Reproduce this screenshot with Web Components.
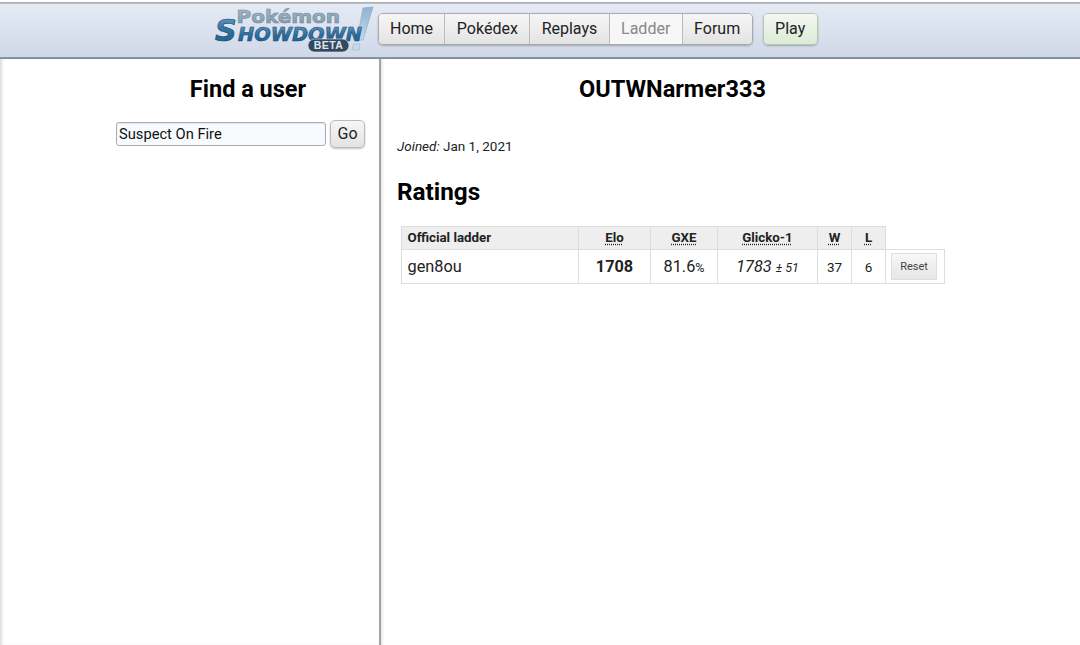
<!DOCTYPE html>
<html><head><meta charset="utf-8">
<style>
html,body{margin:0;padding:0;height:100%;overflow:hidden;background:#fff;font-family:Roboto,"Liberation Sans",sans-serif;color:#000}
body{display:flex;flex-direction:column;height:645px}
</style></head><body>
<ps-header></ps-header>
<ps-main>
  <ps-sidebar slot="side"></ps-sidebar>
  <ps-profile slot="content"></ps-profile>
</ps-main>
<script>
function def(name,html){
  customElements.define(name,class extends HTMLElement{
    connectedCallback(){ if(this.shadowRoot) return; this.attachShadow({mode:'open'}).innerHTML=html; }
  });
}
def('ps-logo',`<style>:host{display:block;width:164px;height:50px;flex:none}svg{display:block;overflow:visible}</style>
<svg width="164" height="50" viewBox="0 0 164 50">
<defs>
<linearGradient id="blue" x1="0" y1="0" x2="0" y2="1"><stop offset="0" stop-color="#6ea5cd"/><stop offset=".5" stop-color="#2f719f"/><stop offset="1" stop-color="#1e5a8b"/></linearGradient>
<linearGradient id="grey" x1="0" y1="0" x2="0" y2="1"><stop offset="0" stop-color="#a9bdc9"/><stop offset="1" stop-color="#7f9aac"/></linearGradient>
<linearGradient id="bang" x1="0" y1="0" x2="0" y2="1"><stop offset="0" stop-color="#8fb2d3"/><stop offset="1" stop-color="#c5d8ea"/></linearGradient>
</defs>
<text x="22.500" y="19.500" font-family="'DejaVu Sans',sans-serif" font-weight="700" font-size="18.500" fill="url(#grey)" stroke="#6f8a9c" stroke-width=".6" textLength="103.500" lengthAdjust="spacingAndGlyphs">Pokémon</text>
<path d="M149 5 159 4 149 37 143 37Z" fill="url(#bang)" stroke="#86a6c3" stroke-width=".6"/>
<path d="M139.500 41 146 41 145 47 138 47Z" fill="#c5d8ea" stroke="#9db8d0" stroke-width=".6"/>
<text x="1" y="38" font-family="'DejaVu Sans',sans-serif" font-weight="700" font-style="italic" font-size="30" fill="url(#blue)" stroke="#174a75" stroke-width=".7">S</text>
<text x="24" y="38" font-family="'DejaVu Sans',sans-serif" font-weight="700" font-style="italic" font-size="19" fill="url(#blue)" stroke="#174a75" stroke-width=".6" textLength="124" lengthAdjust="spacingAndGlyphs">HOWDOWN</text>
<rect x="94" y="36" width="41" height="13" rx="6.500" fill="#33495f" stroke="#dfe7ee" stroke-width=".6"/>
<text x="114.500" y="46.300" text-anchor="middle" font-family="'Liberation Sans',sans-serif" font-weight="700" font-size="10.500" letter-spacing=".4" fill="#dfe7ee">BETA</text>
</svg>`);
def('ps-nav-group',`<style>:host{display:flex;flex:none;border:1px solid #aaa;border-radius:5px;box-shadow:0 1px 2px rgba(0,0,0,.25);overflow:hidden;height:30px}</style><slot></slot>`);
def('ps-nav-item',`<style>:host{display:flex;align-items:center;padding:0 11.400px 2px;font-size:16px;color:#222;background:linear-gradient(to bottom,#f6f6f6,#e3e3e3);border-left:1px solid #bbb;white-space:nowrap}
:host(:first-child){border-left:0;padding-left:11px}
:host([current]){color:#888;background:#f7f7f7}
:host([play]){padding:0 11.500px 2px;border-left:0;background:linear-gradient(to bottom,#f4f7f2,#dcebd6)}</style><slot></slot>`);
def('ps-header',`<style>:host{display:flex;flex:none;height:57px;border-top:2px solid #fff;background:linear-gradient(to bottom,#e6ebf5,#cfd8e8);position:relative;padding-left:214px;align-items:flex-start}
.top{position:absolute;left:0;right:0;top:0;height:2px;background:linear-gradient(to bottom,#a2a6ac,#c2c7d0)}
.bot{position:absolute;left:0;right:0;bottom:0;height:2px;background:linear-gradient(to bottom,#8996a8,#7f8a9c)}
ps-logo{margin:1px 0 0 0;width:164px}
.nav{display:flex;margin:11px 0 0 0}
.g2{margin-left:10px}
</style><div class="top"></div>
<ps-logo></ps-logo>
<div class="nav">
<ps-nav-group><ps-nav-item>Home</ps-nav-item><ps-nav-item>Pokédex</ps-nav-item><ps-nav-item>Replays</ps-nav-item><ps-nav-item current>Ladder</ps-nav-item><ps-nav-item>Forum</ps-nav-item></ps-nav-group>
<ps-nav-group class="g2" style="border-color:#b6c9ae"><ps-nav-item play>Play</ps-nav-item></ps-nav-group>
</div>
<div class="bot"></div>`);
def('ps-main',`<style>:host{display:flex;flex:1;min-height:0;background:#fff}
.side{flex:none;box-sizing:border-box;border-right:2px solid #a0a4aa;width:381px;box-shadow:inset 3px 0 3px -1px #ddd}
.content{flex:1;min-width:0;box-shadow:inset 3px 0 3px -2px #ddd}</style>
<div class="side"><slot name="side"></slot></div><div class="content"><slot name="content"></slot></div>`);
def('ps-button',`<style>:host{display:inline-flex;align-items:center;justify-content:center;box-sizing:border-box;border:1px solid #bbb;border-radius:5px;background:linear-gradient(to bottom,#f6f6f6,#e3e3e3);box-shadow:0 1px 2px rgba(0,0,0,.25);font-size:16px;color:#222;height:28px;width:35px;padding-bottom:2px}</style><slot></slot>`);
def('ps-sidebar',`<style>:host{display:block}
h1{margin:0;font-size:23.500px;line-height:28px;font-weight:700;padding:16px 0 0 120px;text-align:center;box-sizing:border-box;width:376px}
.row{display:flex;gap:4px;align-items:flex-start;justify-content:flex-end;padding:17px 0 0 0;width:365px;box-sizing:border-box}
.input{box-sizing:border-box;width:210px;height:24px;margin-top:2px;border:1px solid #a9adb3;border-radius:3px;background:#f8fbfe;padding:0 2px;font-size:14.700px;line-height:22px;color:#111;text-align:left;box-shadow:inset 0 1px 1px rgba(0,0,0,.08)}
</style><h1>Find a user</h1>
<div class="row"><div class="input">Suspect On Fire</div><ps-button>Go</ps-button></div>`);
def('ps-ratings',`<style>:host{display:block;padding:0 0 0 20px}
table{border-collapse:collapse;table-layout:fixed;width:544px;font-size:16.300px}
th,td{border:1px solid #ddd;padding:0;text-align:center;box-sizing:border-box}
th{height:23px;padding-bottom:2px;font-size:13.300px;font-weight:700;background:#eee;color:#222}
td{height:34px;color:#222}
th.l,td.l{text-align:left;padding-left:5.500px}
th.e{border:0;border-bottom:1px solid #ddd;background:none}
abbr{text-decoration:underline dotted;text-underline-offset:2px}
small{font-size:12.500px}.sm{font-size:13.500px}
td.r{text-align:left;padding-left:5px}
.reset{display:flex;align-items:center;justify-content:center;width:46px;height:27px;box-sizing:border-box;border:1px solid #ddd;background:linear-gradient(to bottom,#f8f8f8,#e6e6e6);font-size:11px;color:#444}
</style>
<table><colgroup><col style="width:177px"><col style="width:72px"><col style="width:67px"><col style="width:100px"><col style="width:34px"><col style="width:34px"><col style="width:59px"></colgroup>
<tr><th class="l">Official ladder</th><th><abbr>Elo</abbr></th><th><abbr>GXE</abbr></th><th><abbr>Glicko-1</abbr></th><th><abbr>W</abbr></th><th><abbr>L</abbr></th><th class="e"></th></tr>
<tr><td class="l">gen8ou</td><td><b>1708</b></td><td>81.6<small>%</small></td><td><em>1783 <small>± 51</small></em></td><td class="sm">37</td><td class="sm">6</td><td class="r"><span class="reset">Reset</span></td></tr></table>`);
def('ps-profile',`<style>:host{display:block;padding:0 16px}
h1{margin:0;font-size:23.500px;line-height:28px;font-weight:700;padding-top:16px;text-align:center;width:551px}
.joined{margin:35px 0 0 0;font-size:13.500px;line-height:16px;color:#222}
h2{margin:24px 0 0 0;font-size:24.300px;line-height:28px;font-weight:700}
ps-ratings{margin-top:20px;margin-left:-16px}
</style>
<h1>OUTWNarmer333</h1>
<p class="joined"><em>Joined:</em> Jan 1, 2021</p>
<h2>Ratings</h2>
<ps-ratings></ps-ratings>`);
</script>
</body></html>
